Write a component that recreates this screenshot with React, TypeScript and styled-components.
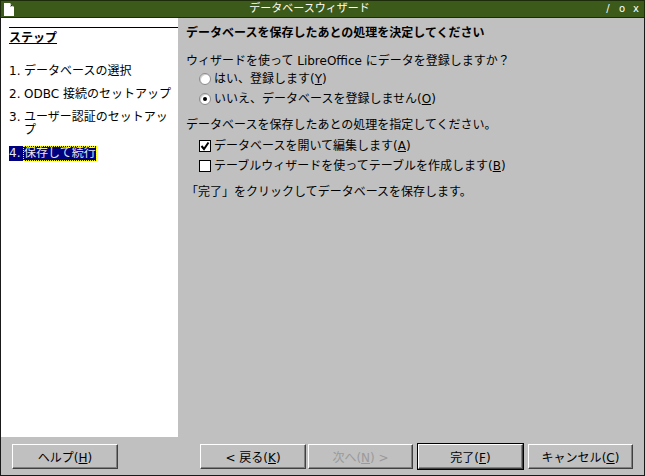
import * as React from "react";
import styled, { createGlobalStyle } from "styled-components";

const GlobalStyle = createGlobalStyle`
  html, body {
    margin: 0;
    padding: 0;
    background: #c0c0c0;
  }
  body {
    font-family: "DejaVu Sans", "Noto Sans CJK JP", sans-serif;
    font-size: 12px;
    color: #000;
  }
`;

const Window = styled.div`
  width: 645px;
  height: 476px;
  box-sizing: border-box;
  display: flex;
  flex-direction: column;
  background: #c0c0c0;
  border-left: 1px solid #1a1a1a;
  border-right: 1px solid #1a1a1a;
  border-bottom: 1px solid #1a1a1a;
`;

const TitleBar = styled.div`
  height: 18px;
  margin: 0 -1px;
  box-sizing: border-box;
  background: #3c5b1a;
  border: 1px solid #1c2c0a;
  display: flex;
  align-items: center;
  padding: 0 4px 0 2px;
  color: #fff;
  svg {
    flex: none;
  }
`;

const TitleText = styled.div`
  flex: 1;
  text-align: center;
  font-size: 11px;
  line-height: 16px;
`;

const TitleButtons = styled.div`
  display: flex;
  gap: 6px;
  font-size: 10px;
  line-height: 16px;
  font-family: "DejaVu Sans", sans-serif;
`;

const TitleGlyph = styled.span`
  width: 8px;
  text-align: center;
`;

const Body = styled.div`
  flex: 1;
  display: flex;
  min-height: 0;
`;

const Sidebar = styled.div`
  width: 177px;
  background: #fff;
  padding: 9px 0 0 8px;
  box-sizing: border-box;
`;

const SideHeading = styled.div`
  border-top: 1px solid #000;
  padding-top: 3px;
  font-weight: bold;
  line-height: 14px;
`;

const Underlined = styled.span`
  text-decoration: underline;
`;

const StepList = styled.ol`
  list-style: none;
  margin: 20px 0 0 0;
  padding: 0 4px 0 0;
  display: flex;
  flex-direction: column;
  gap: 10px;
`;

const Step = styled.li<{ $active?: boolean }>`
  display: flex;
  line-height: 13px;
  align-self: ${(p) => (p.$active ? "flex-start" : "stretch")};
  background: ${(p) => (p.$active ? "#000080" : "transparent")};
  color: ${(p) => (p.$active ? "#e8e8e8" : "#000")};
  padding: ${(p) => (p.$active ? "1px 0" : "0")};
  margin: ${(p) => (p.$active ? "-1px 0" : "0")};
`;

const StepNum = styled.span`
  flex: none;
  width: 15px;
`;

const StepLabel = styled.span<{ $focus?: boolean }>`
  outline: ${(p) => (p.$focus ? "1px dotted #ffff00" : "none")};
  outline-offset: 0;
`;

const Content = styled.div`
  flex: 1;
  padding: 8px 8px 0 8px;
  display: flex;
  flex-direction: column;
  line-height: 14px;
`;

const Heading = styled.div`
  font-weight: bold;
`;

const Question = styled.div<{ $top: number }>`
  margin-top: ${(p) => p.$top}px;
`;

const OptionRow = styled.label<{ $top: number }>`
  display: flex;
  align-items: center;
  gap: 3px;
  margin: ${(p) => p.$top}px 0 0 13px;
`;

const Radio = styled.span<{ $checked?: boolean }>`
  width: 12px;
  height: 12px;
  box-sizing: border-box;
  border-radius: 50%;
  background: #fff;
  border: 1px solid #8a8a8a;
  box-shadow: inset 1px 1px 0 #d0d0d0;
  display: flex;
  align-items: center;
  justify-content: center;
  &::after {
    content: "";
    width: 4px;
    height: 4px;
    border-radius: 50%;
    background: ${(p) => (p.$checked ? "#000" : "transparent")};
  }
`;

const Check = styled.span`
  width: 12px;
  height: 12px;
  box-sizing: border-box;
  background: #fff;
  border: 1px solid #000;
  display: flex;
  align-items: center;
  justify-content: center;
`;

const Footer = styled.div`
  height: 38px;
  display: flex;
  align-items: flex-start;
  padding: 7px 11px 0 11px;
  box-sizing: border-box;
`;

const ButtonGroup = styled.div`
  margin-left: auto;
  display: flex;
  gap: 2px;
`;

const Button = styled.button<{ $default?: boolean; $wide?: boolean }>`
  width: ${(p) => (p.$wide ? "106px" : "105px")};
  height: 25px;
  box-sizing: border-box;
  background: #c0c0c0;
  font-family: inherit;
  font-size: 12px;
  padding: 0;
  color: ${(p) => (p.disabled ? "#9a9a9a" : "#000")};
  border: 1px solid;
  border-color: #fff #404040 #404040 #fff;
  box-shadow: ${(p) =>
    p.$default ? "0 0 0 1px #000, inset -1px -1px 0 #808080" : "inset -1px -1px 0 #808080"};
  margin-left: ${(p) => (p.$default ? "3px" : "0")};
  margin-right: ${(p) => (p.$default ? "3px" : "0")};
`;

const DocIcon = () => (
  <svg width="12" height="15" viewBox="0 0 12 15">
    <path d="M1 1 H7 L11 5 V14 H1 Z" fill="#fff" />
    <path d="M7 1 L11 5 H7 Z" fill="#1c2c0a" />
    <path d="M7.5 1.5 V4.5 H10.5" fill="none" stroke="#fff" strokeWidth="0.8" />
  </svg>
);

const CheckMark = () => (
  <svg width="10" height="10" viewBox="0 0 10 10">
    <path d="M1.5 5 L4 8 L8.5 1.5" fill="none" stroke="#000" strokeWidth="2" />
  </svg>
);

const Key = ({ k }: { k: string }) => (
  <>
    (<Underlined>{k}</Underlined>)
  </>
);

export default function App() {
  return (
    <>
      <GlobalStyle />
      <Window>
        <TitleBar>
          <DocIcon />
          <TitleText>データベースウィザード</TitleText>
          <TitleButtons>
            <TitleGlyph>/</TitleGlyph>
            <TitleGlyph>o</TitleGlyph>
            <TitleGlyph>x</TitleGlyph>
          </TitleButtons>
        </TitleBar>
        <Body>
          <Sidebar>
            <SideHeading>
              <Underlined>ステップ</Underlined>
            </SideHeading>
            <StepList>
              <Step>
                <StepNum>1.</StepNum>
                <StepLabel>データベースの選択</StepLabel>
              </Step>
              <Step>
                <StepNum>2.</StepNum>
                <StepLabel>ODBC 接続のセットアップ</StepLabel>
              </Step>
              <Step>
                <StepNum>3.</StepNum>
                <StepLabel>
                  ユーザー認証のセットアッ
                  <br />プ
                </StepLabel>
              </Step>
              <Step $active>
                <StepNum>4.</StepNum>
                <StepLabel $focus>保存して続行</StepLabel>
              </Step>
            </StepList>
          </Sidebar>
          <Content>
            <Heading>データベースを保存したあとの処理を決定してください</Heading>
            <Question $top={14}>ウィザードを使って LibreOffice にデータを登録しますか？</Question>
            <OptionRow $top={4}>
              <Radio />
              <span>
                はい、登録します<Key k="Y" />
              </span>
            </OptionRow>
            <OptionRow $top={6}>
              <Radio $checked />
              <span>
                いいえ、データベースを登録しません<Key k="O" />
              </span>
            </OptionRow>
            <Question $top={12}>データベースを保存したあとの処理を指定してください。</Question>
            <OptionRow $top={7}>
              <Check>
                <CheckMark />
              </Check>
              <span>
                データベースを開いて編集します<Key k="A" />
              </span>
            </OptionRow>
            <OptionRow $top={6}>
              <Check />
              <span>
                テーブルウィザードを使ってテーブルを作成します<Key k="B" />
              </span>
            </OptionRow>
            <Question $top={12}>「完了」をクリックしてデータベースを保存します。</Question>
          </Content>
        </Body>
        <Footer>
          <Button $wide>
            ヘルプ<Key k="H" />
          </Button>
          <ButtonGroup>
            <Button $wide>
              &lt; 戻る<Key k="K" />
            </Button>
            <Button disabled>
              次へ<Key k="N" /> &gt;
            </Button>
            <Button $default>
              完了<Key k="F" />
            </Button>
            <Button>
              キャンセル<Key k="C" />
            </Button>
          </ButtonGroup>
        </Footer>
      </Window>
    </>
  );
}
